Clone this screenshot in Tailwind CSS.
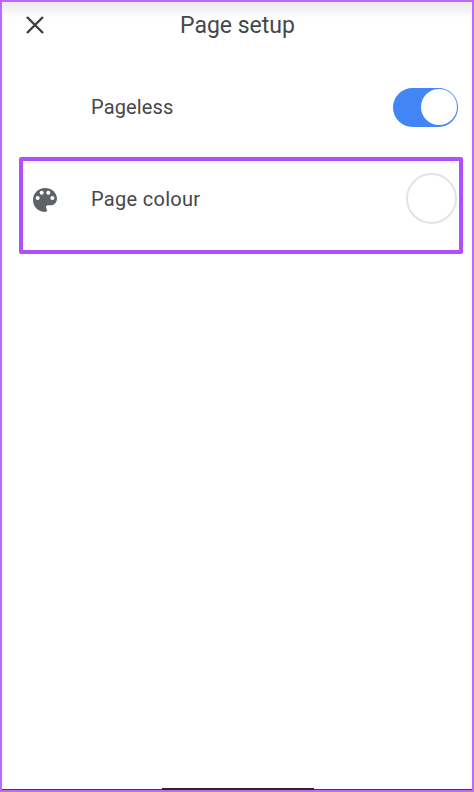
<!DOCTYPE html>
<html lang="en">
<head>
    <meta charset="UTF-8">
    <meta name="viewport" content="width=device-width, initial-scale=1.0">
    <title>Page setup</title>
    <script src="https://cdn.jsdelivr.net/npm/@tailwindcss/browser@4"></script>
</head>
<body class="bg-white">
    <div class="relative w-[474px] h-[792px] overflow-hidden bg-white border-x-2 border-t-2 border-b-[2px] border-[#c267fd] font-['Roboto',sans-serif] text-[#45484b]">
        <!-- Top bar -->
        <div class="flex items-center h-[46px] pl-[24px] bg-linear-to-b from-[#e9e9e9] to-white to-[34%]">
            <svg class="w-[18px] h-[18px] shrink-0" viewBox="0 0 18 18" fill="none" stroke="#3c4043" stroke-width="2.4">
                <path d="M1 1L17 17M17 1L1 17"></path>
            </svg>
            <h1 class="ml-[136px] text-[23px] font-normal leading-none">Page setup</h1>
        </div>

        <!-- Pageless row -->
        <div class="flex items-center h-[78px] mt-[20px] pl-[89px] pr-[14px]">
            <span class="flex-1 text-[20px] tracking-[0.15px] leading-none">Pageless</span>
            <div class="flex items-center justify-end w-[65px] h-[39px] rounded-full bg-[#4285f4] pr-[1px]">
                <div class="w-[36px] h-[36px] rounded-full bg-white"></div>
            </div>
        </div>

        <!-- Page colour row, highlighted -->
        <div class="flex items-center w-[444px] h-[97px] mt-[11px] ml-[17px] border-4 border-[#b14ffb] rounded-[2px]">
            <svg class="w-[32px] h-[32px] ml-[6px] mt-[-12px] shrink-0" viewBox="0 0 24 24" fill="#5f6368">
                <path d="M12 3c-4.97 0-9 4.03-9 9s4.03 9 9 9c.83 0 1.5-.67 1.5-1.5 0-.39-.15-.74-.39-1.01-.23-.26-.38-.61-.38-.99 0-.83.67-1.5 1.5-1.5H16c2.76 0 5-2.24 5-5 0-4.42-4.03-8-9-8zm-5.5 9c-.83 0-1.5-.67-1.5-1.5S5.67 9 6.5 9 8 9.67 8 10.5 7.33 12 6.5 12zm3-4C8.67 8 8 7.33 8 6.5S8.67 5 9.5 5s1.5.67 1.5 1.5S10.33 8 9.5 8zm5 0c-.83 0-1.5-.67-1.5-1.5S13.67 5 14.5 5s1.5.67 1.5 1.5S15.33 8 14.5 8zm3 4c-.83 0-1.5-.67-1.5-1.5S16.67 9 17.5 9s1.5.67 1.5 1.5-.67 1.5-1.5 1.5z"></path>
            </svg>
            <span class="flex-1 ml-[30px] mt-[-13px] text-[20px] tracking-[0.3px] leading-none">Page colour</span>
            <div class="w-[51px] h-[51px] mr-[2px] mt-[-14px] rounded-full border-2 border-[#e3e3e3]"></div>
        </div>

        <!-- Bottom edge and home indicator -->
        <div class="absolute bottom-0 left-0 w-full h-px bg-[#4a3a58]"></div>
        <div class="absolute bottom-0 left-[160px] w-[152px] h-[2px] bg-[#2b2730]"></div>
    </div>
</body>
</html>
